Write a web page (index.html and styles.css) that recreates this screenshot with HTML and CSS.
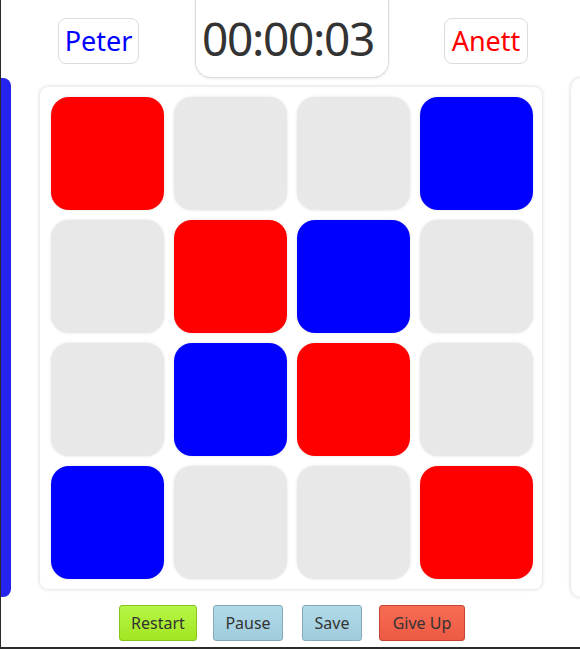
FILE: index.html
```html
<!DOCTYPE html>
<html>
<head>
<meta charset="utf-8">
<link rel="stylesheet" href="styles.css">
</head>
<body>
<div class="frame">
  <header class="top">
    <div class="name name-blue">Peter</div>
    <div class="timer">00:00:03</div>
    <div class="name name-red">Anett</div>
  </header>
  <main class="middle">
    <div class="side-left"></div>
    <div class="board">
      <div class="cell red"></div><div class="cell"></div><div class="cell"></div><div class="cell blue"></div>
      <div class="cell"></div><div class="cell red"></div><div class="cell blue"></div><div class="cell"></div>
      <div class="cell"></div><div class="cell blue"></div><div class="cell red"></div><div class="cell"></div>
      <div class="cell blue"></div><div class="cell"></div><div class="cell"></div><div class="cell red"></div>
    </div>
    <div class="side-right"></div>
  </main>
  <footer class="buttons">
    <button class="btn btn-restart">Restart</button>
    <button class="btn btn-pause">Pause</button>
    <button class="btn btn-save">Save</button>
    <button class="btn btn-giveup">Give Up</button>
  </footer>
</div>
</body>
</html>
```
FILE: styles.css
```css
html, body {
  margin: 0;
  padding: 0;
  background: #fff;
}
body {
  font-family: "Noto Sans", "Open Sans", sans-serif;
}
.frame {
  width: 580px;
  height: 649px;
  box-sizing: border-box;
  border-left: 1px solid #2b2b2b;
  border-bottom: 2px solid #2b2b2b;
  overflow: hidden;
  display: flex;
  flex-direction: column;
}
.top {
  height: 78px;
  flex-shrink: 0;
  display: flex;
  align-items: flex-start;
}
.name {
  flex-shrink: 0;
  margin-top: 18px;
  height: 46px;
  box-sizing: border-box;
  border: 1px solid #dcdcdc;
  border-radius: 8px;
  display: flex;
  align-items: center;
  justify-content: center;
  font-size: 27px;
  line-height: 1;
  padding-bottom: 2px;
}
.name-blue {
  color: #0000ff;
  margin-left: 57px;
  width: 81px;
}
.name-red {
  color: #ff0000;
  margin-left: 55px;
  width: 84px;
}
.timer {
  flex-shrink: 0;
  margin-left: 56px;
  width: 194px;
  height: 78px;
  box-sizing: border-box;
  border: 1px solid #dcdcdc;
  border-top: none;
  border-radius: 0 0 16px 16px;
  box-shadow: 0 1px 3px rgba(0,0,0,0.08);
  display: flex;
  align-items: center;
  justify-content: center;
  font-size: 46px;
  letter-spacing: -1.3px;
  color: #333;
  padding: 0 8px 2px 0;
}
.middle {
  height: 519px;
  flex-shrink: 0;
  display: flex;
  align-items: stretch;
}
.side-left {
  flex-shrink: 0;
  width: 10px;
  background: #2424ee;
  border-radius: 0 8px 8px 0;
}
.board {
  flex-shrink: 0;
  margin: 9px 0 8px 29px;
  width: 502px;
  box-sizing: border-box;
  padding: 10px 11px;
  background: #fff;
  border-radius: 8px;
  box-shadow: 0 0 4px rgba(0,0,0,0.18);
  display: grid;
  grid-template-columns: repeat(4, 113px);
  grid-template-rows: repeat(4, 113px);
  gap: 10px;
}
.cell {
  background: #e8e8e8;
  border-radius: 18px;
  box-shadow: 0 0 3px rgba(0,0,0,0.12);
}
.cell.red {
  background: #ff0000;
}
.cell.blue {
  background: #0000ff;
}
.side-right {
  flex-shrink: 0;
  margin-left: 29px;
  width: 24px;
  background: #fff;
  border-radius: 10px;
  box-shadow: 0 0 4px rgba(0,0,0,0.2);
}
.buttons {
  margin-top: 8px;
  display: flex;
  justify-content: center;
  padding-left: 3px;
}
.btn {
  flex-shrink: 0;
  height: 36px;
  box-sizing: border-box;
  border-radius: 3px;
  font-family: "Noto Sans", "Open Sans", sans-serif;
  font-size: 16px;
  color: #333;
  padding: 0;
  cursor: pointer;
}
.btn-restart {
  width: 78px;
  background: linear-gradient(#b6f646, #a2e622);
  border: 1px solid #86c41c;
}
.btn-pause {
  width: 70px;
  margin-left: 16px;
  background: linear-gradient(#b0dae8, #a0ccdc);
  border: 1px solid #86a8b8;
}
.btn-save {
  width: 60px;
  margin-left: 19px;
  background: linear-gradient(#b0dae8, #a0ccdc);
  border: 1px solid #86a8b8;
}
.btn-giveup {
  width: 86px;
  margin-left: 17px;
  background: linear-gradient(#f86c54, #ec5a44);
  border: 1px solid #c64432;
}
```
